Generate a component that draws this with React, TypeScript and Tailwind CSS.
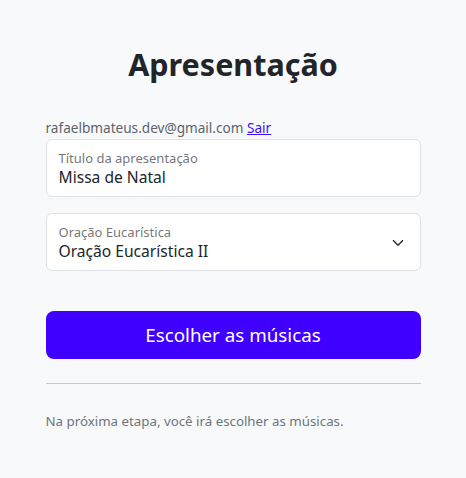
import React from "react";

export default function App() {
  return (
    <div className="min-h-screen bg-[#f8f9fa] font-['Noto_Sans',sans-serif] text-[#212529]">
      <div className="w-[375px] mx-auto pt-[47px] flex flex-col">
        <h1 className="text-center text-[30.5px] font-bold leading-[35px] mb-[36px]">Apresentação</h1>
        <p className="text-[13.6px] leading-[20px] text-[#5c636a] mb-[1px]">
          rafaelbmateus.dev@gmail.com{" "}
          <a href="#" className="text-[#3d0dff] underline">Sair</a>
        </p>
        <div className="h-[58px] bg-white border border-[#dee2e6] rounded-[6px] px-[12px] pt-[1px] flex flex-col justify-center">
          <span className="text-[13px] leading-[16px] text-[#212529]/65">Título da apresentação</span>
          <span className="text-[15.6px] leading-[22px]">Missa de Natal</span>
        </div>
        <div className="mt-[16px] h-[58px] bg-white border border-[#dee2e6] rounded-[6px] pl-[12px] pr-[16px] pt-[1px] flex items-center justify-between">
          <div className="flex flex-col">
            <span className="text-[13px] leading-[16px] text-[#212529]/65">Oração Eucarística</span>
            <span className="text-[15.6px] leading-[22px]">Oração Eucarística II</span>
          </div>
          <svg width="12" height="12" viewBox="0 0 16 16" fill="none">
            <path d="M2 5l6 6 6-6" stroke="#343a40" strokeWidth="2.2" strokeLinecap="round" strokeLinejoin="round" />
          </svg>
        </div>
        <button className="mt-[40px] h-[48px] rounded-[8px] bg-[#4000ff] text-white text-[18.8px] leading-[30px]">
          Escolher as músicas
        </button>
        <hr className="mt-[24px] border-0 border-t border-[#c8c9ca]" />
        <p className="mt-[27px] text-[13.3px] leading-[20px] text-[#6c757d]">
          Na próxima etapa, você irá escolher as músicas.
        </p>
      </div>
    </div>
  );
}
